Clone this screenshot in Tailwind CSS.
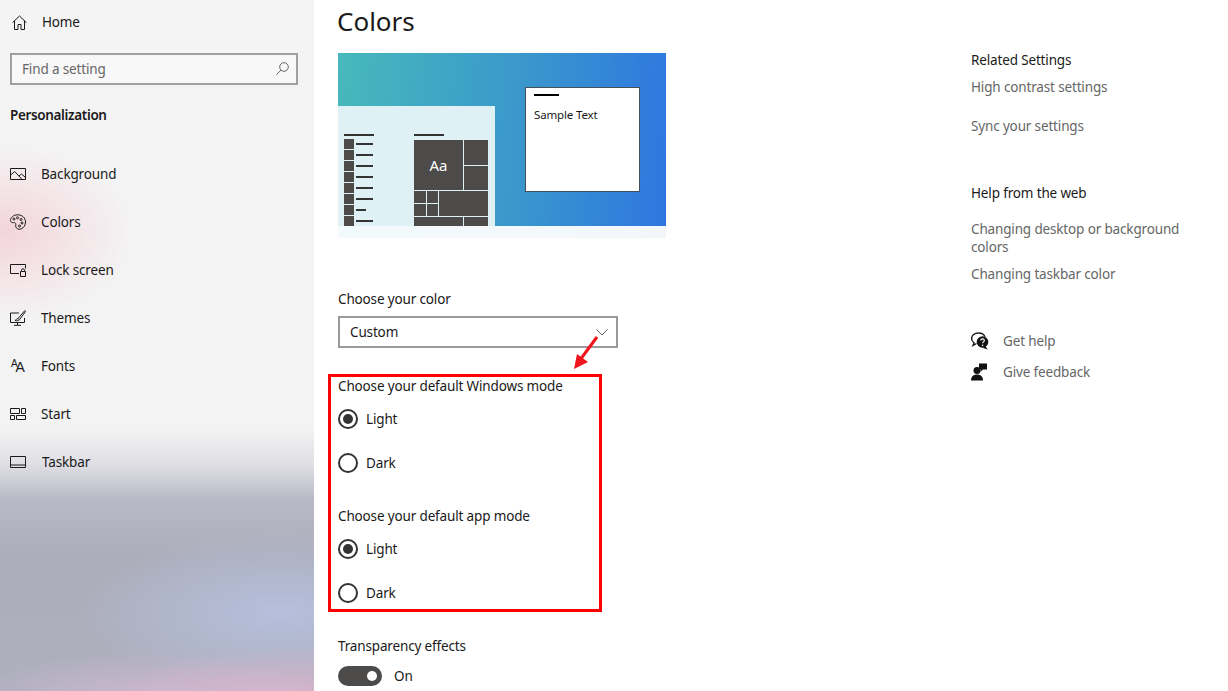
<!DOCTYPE html>
<html lang="en">
<head>
  <meta charset="UTF-8" />
  <title>Settings - Colors</title>
  <script src="https://cdn.jsdelivr.net/npm/@tailwindcss/browser@4"></script>
</head>
<body class="bg-white text-[#1a1a1a] font-['Noto_Sans',sans-serif] text-[13.5px] tracking-[-0.15px] leading-[20px] overflow-hidden">
  <div class="relative flex w-[1228px] h-[691px] overflow-hidden">

    <!-- Sidebar -->
    <aside class="w-[314px] h-[691px] shrink-0 bg-[radial-gradient(ellipse_130px_90px_at_5px_232px,#f3d5dc,transparent),radial-gradient(ellipse_200px_65px_at_300px_710px,#e0b6cf,transparent),radial-gradient(ellipse_190px_60px_at_150px_710px,#d2b8d4,transparent),radial-gradient(ellipse_200px_80px_at_280px_612px,#b5bfdc,transparent),linear-gradient(180deg,#f4f4f4_0,#f3f3f3_430px,#dedee4_465px,#b9b9c5_500px,#acadba_560px,#aeb0be_691px)]">
      <a class="flex items-center h-[20px] mt-[12px] pl-[12px]">
        <svg class="w-[15px] h-[15px] shrink-0" viewBox="0 0 15 15" fill="none" stroke="#1a1a1a" stroke-width="1">
          <path d="M.6 7.600 7.500 1l6.900 6.600M2.500 6v8.500h3.500V9.500h3v5h3.500V6"/>
        </svg>
        <span class="ml-[15px]">Home</span>
      </a>
      <div class="flex items-center justify-between h-[32px] ml-[10px] mr-[16px] mt-[21px] pl-[10px] pr-[7px] pb-[1px] border-2 border-[#a0a0a0] bg-white/40 text-[#666666]">
        <span>Find a setting</span>
        <svg class="w-[13px] h-[13px]" viewBox="0 0 13 13" fill="none" stroke="#666" stroke-width="1">
          <circle cx="8" cy="5" r="4.300"/><path d="M5 8 .6 12.500"/>
        </svg>
      </div>
      <h2 class="mt-[20px] ml-[10px] font-semibold tracking-[-0.35px]">Personalization</h2>
      <nav class="mt-[25px]">
        <a class="flex items-center h-[48px] pl-[10px]">
          <svg class="w-[16px] h-[16px] shrink-0" viewBox="0 0 16 16" fill="none" stroke="#1a1a1a" stroke-width="1">
            <path d="M.5 2.500h15v11H.5zM.7 9l4-3.500 7 7.500M9 10l2.500-2 4 3.500"/>
          </svg>
          <span class="ml-[15px]">Background</span>
        </a>
        <a class="flex items-center h-[48px] pl-[10px]">
          <svg class="w-[16px] h-[16px] shrink-0" viewBox="0 0 16 16" fill="none" stroke="#1a1a1a" stroke-width="1">
            <path d="M7.500.8C3.500.8.500 3.500.500 6.500c0 1.800 1.800 2.300 3 2.100 1.500-.2 2.300.5 2.300 1.700 0 1.500-.5 2.200.5 3.500 1 1.400 3 1.800 5 1 2.500-1 4.200-3.600 4.200-6.800C15.500 4 12.300.8 7.500.8z"/>
            <circle cx="4" cy="5" r="1"/><circle cx="7.500" cy="3.800" r="1"/><circle cx="11" cy="5.500" r="1"/><circle cx="12" cy="9" r="1"/><circle cx="9.500" cy="12" r="1"/>
          </svg>
          <span class="ml-[15px]">Colors</span>
        </a>
        <a class="flex items-center h-[48px] pl-[10px]">
          <svg class="w-[16px] h-[16px] shrink-0" viewBox="0 0 16 16" fill="none" stroke="#1a1a1a" stroke-width="1">
            <path d="M9 11.500H.5v-9h15v4M10.500 9.500h5v5h-5zM11.500 9.500V8.300a1.500 1.500 0 0 1 3 0v1.200"/>
          </svg>
          <span class="ml-[15px]">Lock screen</span>
        </a>
        <a class="flex items-center h-[48px] pl-[10px]">
          <svg class="w-[16px] h-[16px] shrink-0" viewBox="0 0 16 16" fill="none" stroke="#1a1a1a" stroke-width="1">
            <path d="M9 3H.5v9.500h14V8M7.500 12.500v2.500M4 15.300h7M14.800.6 8 8.500l1.500 1.200L15.500 1.500zM7.800 8.500c-1.300.2-1.500 1.500-2.800 2 1.500.5 3.800.2 4.500-.8"/>
          </svg>
          <span class="ml-[15px]">Themes</span>
        </a>
        <a class="flex items-center h-[48px] pl-[11px]">
          <span class="flex items-end w-[15px] h-[16px] shrink-0 font-['Liberation_Sans',sans-serif] leading-none">
            <span class="text-[10px] mb-[5px]">A</span><span class="text-[14px] -ml-[2px]">A</span>
          </span>
          <span class="ml-[15px]">Fonts</span>
        </a>
        <a class="flex items-center h-[48px] pl-[10px]">
          <svg class="w-[16px] h-[16px] shrink-0" viewBox="0 0 16 16" fill="none" stroke="#1a1a1a" stroke-width="1">
            <path d="M.5 2.500h9v5h-9zM11.500 2.500h4v5h-4zM.5 9.500h4v4h-4zM6.500 9.500h9v4h-9z"/>
          </svg>
          <span class="ml-[15px]">Start</span>
        </a>
        <a class="flex items-center h-[48px] pl-[10px]">
          <svg class="w-[16px] h-[16px] shrink-0" viewBox="0 0 16 16" fill="none" stroke="#1a1a1a" stroke-width="1">
            <path d="M.5 2.500h15v11H.5zM.5 11h15"/>
          </svg>
          <span class="ml-[16px]">Taskbar</span>
        </a>
      </nav>
    </aside>

    <!-- Main -->
    <main class="w-[657px] shrink-0 pl-[24px]">
      <h1 class="h-[43px] text-[26px] tracking-normal leading-[43px] -ml-[1px]">Colors</h1>

      <!-- Preview -->
      <div class="w-[328px] mt-[10px]">
        <div class="flex items-start h-[173px] overflow-hidden bg-[linear-gradient(94deg,#47b9bb,#3a97cc_55%,#2e77e0)]">
          <div class="w-[157px] h-[120px] mt-[53px] shrink-0 overflow-hidden bg-[#e0f1f5] flex pt-[28px] pl-[6px]">
            <div class="w-[30px]">
              <div class="w-[30px] h-[2px] bg-[#333]"></div>
              <div class="mt-[3px] flex flex-col gap-[1px]">
                <div class="flex items-center gap-[2px]"><i class="w-[10px] h-[10px] bg-[#4d4b49]"></i><i class="w-[17px] h-[2px] bg-[#333]"></i></div>
                <div class="flex items-center gap-[2px]"><i class="w-[10px] h-[10px] bg-[#4d4b49]"></i><i class="w-[17px] h-[2px] bg-[#333]"></i></div>
                <div class="flex items-center gap-[2px]"><i class="w-[10px] h-[10px] bg-[#4d4b49]"></i><i class="w-[17px] h-[2px] bg-[#333]"></i></div>
                <div class="flex items-center gap-[2px]"><i class="w-[10px] h-[10px] bg-[#4d4b49]"></i><i class="w-[17px] h-[2px] bg-[#333]"></i></div>
                <div class="flex items-center gap-[2px]"><i class="w-[10px] h-[10px] bg-[#4d4b49]"></i><i class="w-[17px] h-[2px] bg-[#333]"></i></div>
                <div class="flex items-center gap-[2px]"><i class="w-[10px] h-[10px] bg-[#4d4b49]"></i><i class="w-[17px] h-[2px] bg-[#333]"></i></div>
                <div class="flex items-center gap-[2px]"><i class="w-[10px] h-[10px] bg-[#4d4b49]"></i><i class="w-[10px] h-[2px] bg-[#333]"></i></div>
                <div class="flex items-center gap-[2px]"><i class="w-[10px] h-[10px] bg-[#4d4b49]"></i><i class="w-[17px] h-[2px] bg-[#333]"></i></div>
              </div>
            </div>
            <div class="ml-[40px] w-[74px]">
              <div class="w-[30px] h-[2px] bg-[#333]"></div>
              <div class="mt-[4px] grid grid-cols-[12px_11px_24px_24px] grid-rows-[25px_24px_12px_12px_24px] gap-[1px]">
                <div class="col-span-3 row-span-2 bg-[#4d4b49] flex items-center justify-center text-white text-[15px] tracking-normal">Aa</div>
                <div class="bg-[#4d4b49]"></div>
                <div class="bg-[#4d4b49]"></div>
                <div class="bg-[#4d4b49]"></div>
                <div class="bg-[#4d4b49]"></div>
                <div class="col-span-2 row-span-2 bg-[#4d4b49]"></div>
                <div class="bg-[#4d4b49]"></div>
                <div class="bg-[#4d4b49]"></div>
                <div class="col-span-3 bg-[#4d4b49]"></div>
                <div class="bg-[#4d4b49]"></div>
              </div>
            </div>
          </div>
          <div class="w-[115px] h-[105px] mt-[34px] ml-[30px] bg-white border border-[#44505c] pl-[8px] pt-[6px]">
            <div class="w-[25px] h-[2px] bg-black"></div>
            <div class="mt-[11px] text-[11.5px] leading-[16px]">Sample Text</div>
          </div>
        </div>
        <div class="h-[12px] bg-[linear-gradient(90deg,#f3fafb,#f3f7fc)]"></div>
      </div>

      <p class="mt-[51px]">Choose your color</p>
      <div class="flex items-center justify-between w-[280px] h-[32px] mt-[7px] pl-[10px] pr-[8px] border-2 border-[#999999]">
        <span>Custom</span>
        <svg class="w-[12px] h-[7px]" viewBox="0 0 12 7" fill="none" stroke="#666" stroke-width="1"><path d="m.5.5 5.500 5.500L11.500.5"/></svg>
      </div>

      <p class="mt-[28px]">Choose your default Windows mode</p>
      <div class="flex items-center h-[44px] mt-[1px]">
        <span class="flex items-center justify-center w-[20px] h-[20px] rounded-full border-2 border-[#333]"><span class="w-[10px] h-[10px] rounded-full bg-[#333]"></span></span>
        <span class="ml-[8px]">Light</span>
      </div>
      <div class="flex items-center h-[44px]">
        <span class="w-[20px] h-[20px] rounded-full border-2 border-[#333]"></span>
        <span class="ml-[8px]">Dark</span>
      </div>

      <p class="mt-[21px]">Choose your default app mode</p>
      <div class="flex items-center h-[44px] mt-[1px]">
        <span class="flex items-center justify-center w-[20px] h-[20px] rounded-full border-2 border-[#333]"><span class="w-[10px] h-[10px] rounded-full bg-[#333]"></span></span>
        <span class="ml-[8px]">Light</span>
      </div>
      <div class="flex items-center h-[44px]">
        <span class="w-[20px] h-[20px] rounded-full border-2 border-[#333]"></span>
        <span class="ml-[8px]">Dark</span>
      </div>

      <p class="mt-[21px]">Transparency effects</p>
      <div class="flex items-center mt-[10px]">
        <span class="flex items-center justify-end w-[44px] h-[20px] pr-[5px] rounded-full bg-[#4d4b49]"><span class="w-[10px] h-[10px] rounded-full bg-white"></span></span>
        <span class="ml-[12px]">On</span>
      </div>
    </main>

    <!-- Related -->
    <section class="pt-[50px] text-[#666666]">
      <h3 class="text-[#1a1a1a]">Related Settings</h3>
      <p class="mt-[7px]">High contrast settings</p>
      <p class="mt-[19px]">Sync your settings</p>
      <h3 class="mt-[47px] text-[#1a1a1a]">Help from the web</h3>
      <p class="mt-[17px] w-[225px] leading-[18px]">Changing desktop or background colors</p>
      <p class="mt-[8px]">Changing taskbar color</p>
      <div class="flex items-center mt-[47px] h-[20px]">
        <svg class="w-[18px] h-[18px] shrink-0" viewBox="0 0 18 18">
          <path d="M7.500 1C3.600 1 .6 3.400.6 6.500c0 1.800 1 3.300 2.500 4.300L2 13.500l3.500-2" fill="none" stroke="#111" stroke-width="1.300"/>
          <path d="M7.500 1c3 0 5.500 1.500 6.500 3.700" fill="none" stroke="#111" stroke-width="1.300"/>
          <circle cx="11.500" cy="10" r="5.800" fill="#111"/><path d="m14 14 3 3.500-5-1.500z" fill="#111"/>
          <path d="M9.800 8.500c0-2.200 3.500-2.200 3.500 0 0 1.400-1.700 1.300-1.700 2.800" fill="none" stroke="#fff" stroke-width="1.200"/><circle cx="11.600" cy="13.200" r=".8" fill="#fff"/>
        </svg>
        <span class="ml-[14px]">Get help</span>
      </div>
      <div class="flex items-center mt-[11px] h-[20px]">
        <svg class="w-[16px] h-[18px] shrink-0" viewBox="0 0 16 18" fill="#111">
          <circle cx="6" cy="7.500" r="3.500"/><path d="M0 17.500c0-4 2.500-6 6-6s6 2 6 6z"/><path d="M8 .5h8v6h-4l-2.500 2.300V6H8z"/>
        </svg>
        <span class="ml-[16px]">Give feedback</span>
      </div>
    </section>

    <!-- Annotation -->
    <div class="absolute left-[328px] top-[374px] w-[274px] h-[238px] border-[3px] border-[#ff0000]"></div>
    <svg class="absolute left-[570px] top-[333px] w-[32px] h-[40px]" viewBox="0 0 32 40">
      <path d="M27 4 10 27" stroke="#f0141c" stroke-width="3" fill="none"/>
      <path d="m4 36 3-15 11 8z" fill="#f0141c"/>
    </svg>
  </div>
</body>
</html>
